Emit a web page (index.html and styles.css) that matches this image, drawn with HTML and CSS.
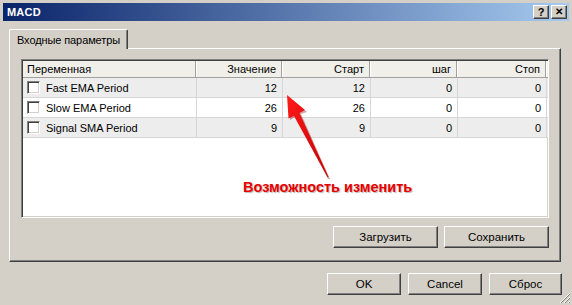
FILE: index.html
```html
<!DOCTYPE html>
<html>
<head>
<meta charset="utf-8">
<link rel="stylesheet" href="styles.css">
</head>
<body>
<div class="window">
  <div class="titlebar">
    <span class="title">MACD</span>
    <div class="tbtns">
      <span class="tbtn">?</span>
      <span class="tbtn x">✕</span>
    </div>
  </div>
  <div class="tabs">
    <div class="tab">Входные параметры</div>
  </div>
  <div class="panel">
    <div class="list">
      <div class="row head">
        <div class="c c1">Переменная</div>
        <div class="c num">Значение</div>
        <div class="c num">Старт</div>
        <div class="c num">шаг</div>
        <div class="c num last">Стоп</div>
      </div>
      <div class="row alt">
        <div class="c c1"><span class="cb"></span>Fast EMA Period</div>
        <div class="c num">12</div>
        <div class="c num">12</div>
        <div class="c num">0</div>
        <div class="c num last">0</div>
      </div>
      <div class="row">
        <div class="c c1"><span class="cb"></span>Slow EMA Period</div>
        <div class="c num">26</div>
        <div class="c num">26</div>
        <div class="c num">0</div>
        <div class="c num last">0</div>
      </div>
      <div class="row alt">
        <div class="c c1"><span class="cb"></span>Signal SMA Period</div>
        <div class="c num">9</div>
        <div class="c num">9</div>
        <div class="c num">0</div>
        <div class="c num last">0</div>
      </div>
    </div>
    <div class="btnrow">
      <span class="btn w105">Загрузить</span>
      <span class="btn w105">Сохранить</span>
    </div>
  </div>
  <div class="btnrow bottom">
    <span class="btn w74">OK</span>
    <span class="btn w74">Cancel</span>
    <span class="btn w73">Сброс</span>
  </div>
  <svg class="arrow" width="572" height="305" viewBox="0 0 572 305">
    <defs>
      <linearGradient id="ag" x1="0" y1="0" x2="1" y2="1">
        <stop offset="0" stop-color="#ff1a1a"/>
        <stop offset="1" stop-color="#c40000"/>
      </linearGradient>
    </defs>
    <polygon points="288,96 306,111 300,113 329,178 327,178 294,116 289,119" fill="#7a0000" opacity="0.35" transform="translate(1,1)"/>
    <polygon points="287,95 305,110 299.5,113 328.5,177 327.5,177 294,116 288.5,118.5" fill="url(#ag)"/>
  </svg>
  <svg class="grip" width="12" height="12" viewBox="0 0 12 12">
    <path d="M11 1 L1 11 M11 5 L5 11 M11 9 L9 11" stroke="#fff" stroke-width="1"/>
    <path d="M11 2 L2 11 M11 6 L6 11 M11 10 L10 11" stroke="#808080" stroke-width="1"/>
  </svg>
  <div class="note">Возможность изменить</div>
</div>
</body>
</html>
```
FILE: styles.css
```css
html, body {
  margin: 0;
  padding: 0;
  background: #d4d0c8;
}
body {
  font-family: Tahoma, "Liberation Sans", "DejaVu Sans", sans-serif;
  font-size: 11px;
  color: #000;
}
.window {
  position: relative;
  width: 572px;
  height: 305px;
  box-sizing: border-box;
  padding: 3px 3px 0 3px;
  background: #d4d0c8;
  overflow: hidden;
}
.titlebar {
  height: 18px;
  background: linear-gradient(to right, #0a246a, #a6caf0);
  display: flex;
  align-items: center;
  justify-content: space-between;
  padding-left: 4px;
  padding-right: 2px;
}
.title {
  color: #fff;
  font-weight: bold;
  font-size: 11px;
  letter-spacing: 0.2px;
}
.tbtns {
  display: flex;
  gap: 2px;
}
.tbtn {
  width: 16px;
  height: 14px;
  box-sizing: border-box;
  background: #d4d0c8;
  border-top: 1px solid #fff;
  border-left: 1px solid #fff;
  border-right: 1px solid #404040;
  border-bottom: 1px solid #404040;
  box-shadow: inset -1px -1px 0 #808080;
  display: flex;
  align-items: center;
  justify-content: center;
  font-weight: bold;
  font-size: 11px;
  line-height: 1;
  font-family: "Liberation Sans", sans-serif;
}
.tbtn.x {
  font-size: 10px;
}
.tabs {
  display: flex;
  margin: 8px 0 0 6px;
  height: 19px;
}
.tab {
  width: 119px;
  height: 20px;
  box-sizing: border-box;
  border-top: 1px solid #fff;
  border-left: 1px solid #fff;
  border-right: 1px solid #404040;
  box-shadow: inset -1px 0 0 #808080;
  border-radius: 2px 2px 0 0;
  padding: 4px 0 0 7px;
  background: #d4d0c8;
  position: relative;
  z-index: 1;
  font-size: 11px;
  letter-spacing: -0.1px;
  white-space: nowrap;
}
.panel {
  margin-left: 6px;
  width: 552px;
  height: 214px;
  box-sizing: border-box;
  border-top: 1px solid #fff;
  border-left: 1px solid #fff;
  border-right: 1px solid #404040;
  border-bottom: 1px solid #404040;
  box-shadow: inset -1px -1px 0 #808080;
  padding: 10px 0 0 11px;
}
.list {
  width: 528px;
  height: 159px;
  box-sizing: border-box;
  background: #fff;
  border-top: 1px solid #808080;
  border-left: 1px solid #808080;
  border-right: 1px solid #fff;
  border-bottom: 1px solid #fff;
  box-shadow: inset 1px 1px 0 #404040, inset -1px -1px 0 #d4d0c8;
  padding: 1px 0 0 1px;
}
.row {
  display: grid;
  grid-template-columns: 174px 86px 88px 87px 89px;
  height: 20px;
  border-bottom: 1px solid #d6d6d6;
  box-sizing: border-box;
  background: #fff;
}
.row.alt {
  background: #ededed;
}
.row.head {
  height: 17px;
  background: #f1efea;
  border-bottom: 1px solid #a0a0a0;
}
.c {
  display: flex;
  align-items: center;
  padding: 0 5px 0 5px;
  border-right: 1px solid #d6d6d6;
  white-space: nowrap;
  overflow: hidden;
  font-size: 11px;
}
.head .c {
  border-right: 1px solid #fff;
  box-shadow: inset -1px 0 0 #a0a0a0;
  padding-right: 6px;
}
.c.num {
  justify-content: flex-end;
}
.c.c1 {
  padding-left: 4px;
}
.cb {
  width: 13px;
  height: 13px;
  box-sizing: border-box;
  background: #fff;
  border-top: 1px solid #808080;
  border-left: 1px solid #808080;
  border-right: 1px solid #fff;
  border-bottom: 1px solid #fff;
  box-shadow: inset 1px 1px 0 #404040, inset -1px -1px 0 #d4d0c8;
  margin-right: 6px;
  flex: none;
}
.btnrow {
  display: flex;
  justify-content: flex-end;
  gap: 6px;
  margin-top: 8px;
  padding-right: 11px;
}
.btnrow.bottom {
  margin-top: 11px;
  gap: 7px;
  padding-right: 7px;
}
.btn {
  height: 22px;
  box-sizing: border-box;
  background: #d4d0c8;
  border-top: 1px solid #fff;
  border-left: 1px solid #fff;
  border-right: 1px solid #404040;
  border-bottom: 1px solid #404040;
  box-shadow: inset -1px -1px 0 #808080;
  display: flex;
  align-items: center;
  justify-content: center;
  font-size: 11.5px;
}
.w105 { width: 105px; }
.w74 { width: 74px; }
.w73 { width: 73px; }
.arrow {
  position: absolute;
  left: 0;
  top: 0;
  pointer-events: none;
}
.grip {
  position: absolute;
  right: 1px;
  bottom: 1px;
}
.note {
  position: absolute;
  left: 243px;
  top: 179px;
  color: #e60000;
  font-weight: bold;
  font-size: 14.5px;
  font-family: "Liberation Sans", sans-serif;
  text-shadow: 1px 1px 1px #b8b8b8;
}
```
